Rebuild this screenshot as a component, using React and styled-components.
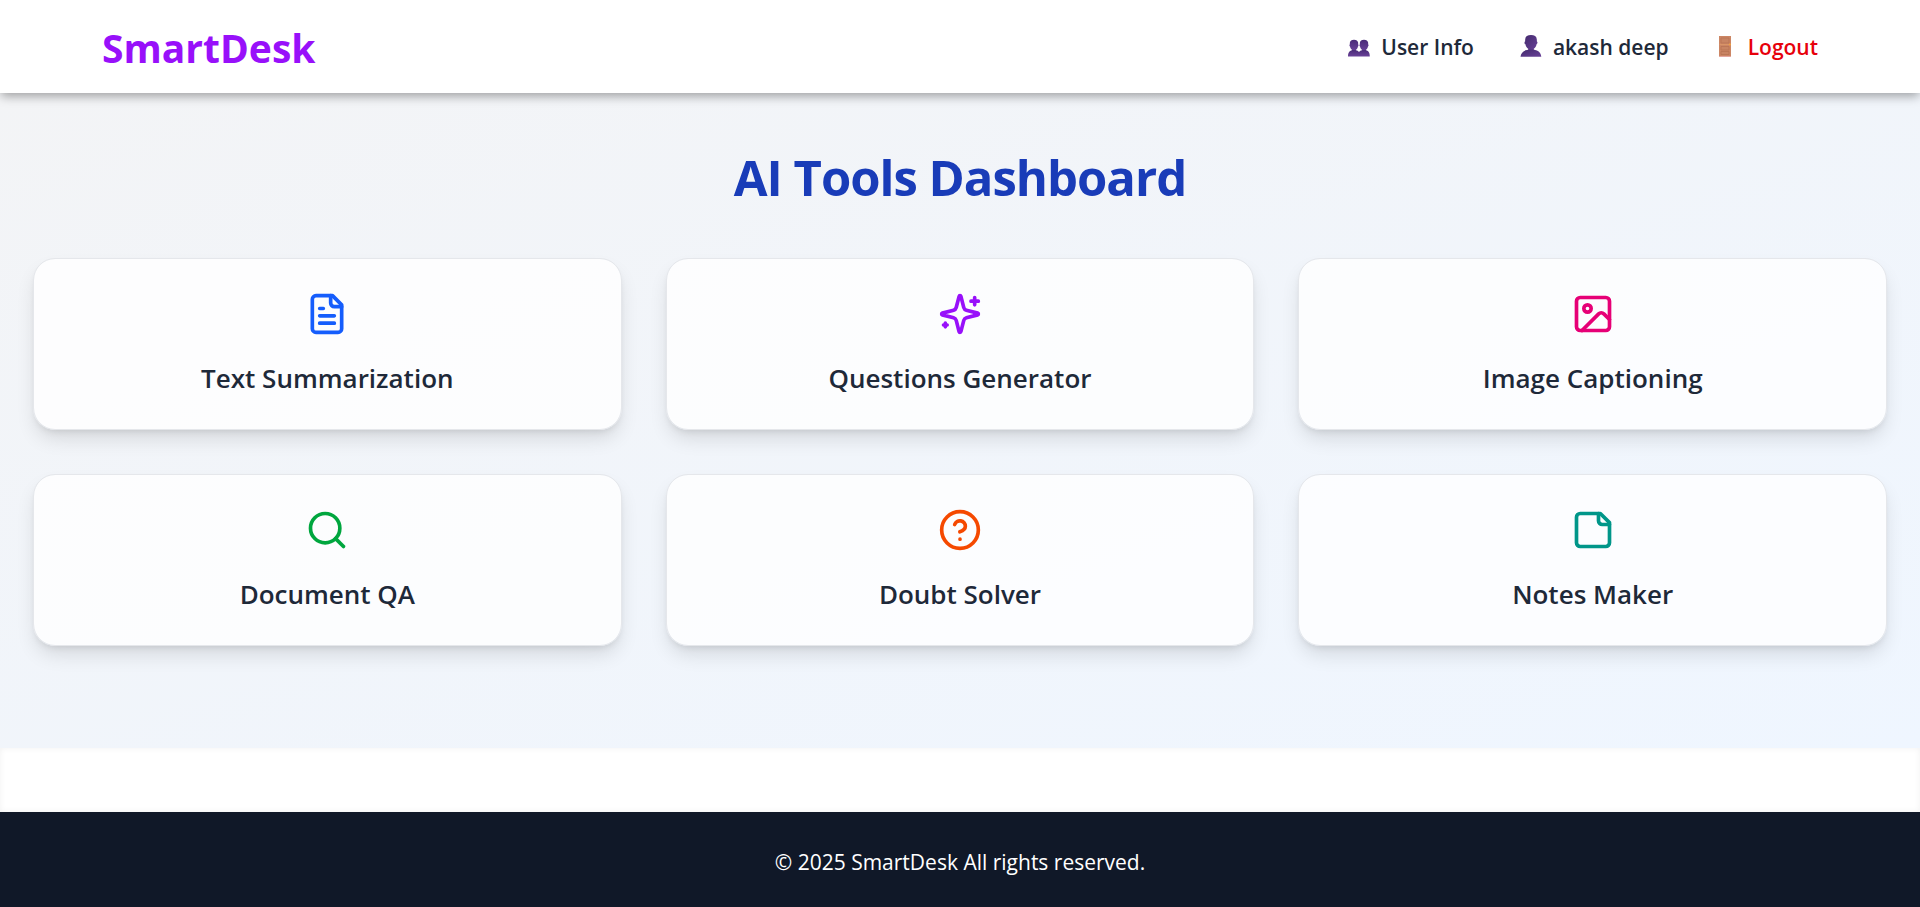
import React from "react";
import styled, { createGlobalStyle } from "styled-components";

const GlobalStyle = createGlobalStyle`
  *, *::before, *::after { box-sizing: border-box; }
  body {
    margin: 0;
    background: #ffffff;
    color: #1e2939;
    font-family: "Segoe UI", "Open Sans", "Noto Sans", sans-serif;
  }
`;

const Page = styled.div`
  min-height: 100vh;
  display: flex;
  flex-direction: column;
`;

const Header = styled.header`
  position: relative;
  z-index: 1;
  display: flex;
  align-items: center;
  justify-content: space-between;
  padding: 20px 102px 17px;
  background: #ffffff;
  box-shadow: 0 4px 10px -1px rgba(0, 0, 0, 0.36);
`;

const Brand = styled.a`
  color: #9810fa;
  font-size: 39px;
  line-height: 56px;
  font-weight: 700;
  text-decoration: none;
`;

const Nav = styled.nav`
  display: flex;
  align-items: center;
  gap: 45px;
  padding-bottom: 3px;
`;

const NavItem = styled.a`
  display: flex;
  align-items: center;
  gap: 10px;
  color: ${(p) => p.$color || "#1e2939"};
  font-size: 21px;
  line-height: 32px;
  font-weight: 600;
  text-decoration: none;
`;

const LogoutButton = styled(NavItem).attrs({ as: "button", type: "button" })`
  padding: 0;
  border: 0;
  background: none;
  font-family: inherit;
  cursor: pointer;
`;

const Main = styled.main`
  display: flex;
  flex-direction: column;
  gap: 47px;
  padding: 50px 33px 102px;
  background: linear-gradient(to bottom right, #f3f4f6, #eff6ff);
`;

const Title = styled.h1`
  margin: 0;
  color: #193cb8;
  font-size: 49px;
  line-height: 68px;
  font-weight: 700;
  letter-spacing: -1px;
  text-align: center;
`;

const Grid = styled.div`
  display: grid;
  grid-template-columns: repeat(3, minmax(0, 1fr));
  gap: 44px;
`;

const Card = styled.a`
  display: flex;
  flex-direction: column;
  align-items: center;
  gap: 25px;
  padding: 33px;
  border: 1px solid #e5e7eb;
  border-radius: 22px;
  background: rgba(255, 255, 255, 0.8);
  background-clip: padding-box;
  box-shadow: 0 11px 20px -3px rgba(0, 0, 0, 0.12), 0 4px 7px -3px rgba(0, 0, 0, 0.1);
  color: #1e2939;
  text-decoration: none;
`;

const CardIcon = styled.svg`
  width: 44px;
  height: 44px;
  fill: none;
  stroke: ${(p) => p.$color};
  stroke-width: 2;
  stroke-linecap: round;
  stroke-linejoin: round;
`;

const CardTitle = styled.h2`
  margin: 0;
  font-size: 26px;
  line-height: 35px;
  font-weight: 600;
  text-align: center;
`;

const Strip = styled.div`
  flex: 1;
  min-height: 64px;
  background: #ffffff;
  box-shadow: inset 0 0 6px rgba(0, 0, 0, 0.06);
`;

const Footer = styled.footer`
  padding: 36px 33px 30px;
  background: #101828;
  color: #ffffff;
  font-size: 21px;
  line-height: 29px;
  text-align: center;
`;

const FooterText = styled.p`
  margin: 0;
`;

const TwoUsersIcon = () => (
  <svg width="24" height="24" viewBox="0 -1 24 24" aria-hidden="true">
    <defs>
      <linearGradient id="users" x1="0" y1="0" x2="0" y2="1">
        <stop offset="0" stopColor="#4a2b78" />
        <stop offset="1" stopColor="#6a4299" />
      </linearGradient>
    </defs>
    <g fill="url(#users)">
      <path d="M2.9 6.6C3.1 4.7 4.6 3.7 7 3.7s3.9 1 4.1 2.9l.1 2c.5.1.5 1.6-.2 1.9-.3 1.5-1.1 2.6-2 3.2v1.2H5v-1.2c-.9-.6-1.7-1.700-2-3.200-.7-.3-.7-1.800-.2-1.900z" />
      <path d="M12.900 6.600c.2-1.900 1.700-2.900 4.100-2.900s3.900 1 4.100 2.900l.1 2c.5.1.5 1.600-.2 1.900-.3 1.500-1.100 2.600-2 3.200v1.200h-4v-1.200c-.9-.6-1.700-1.700-2-3.200-.7-.3-.7-1.800-.2-1.900z" />
      <path d="M1 20.500c0-4 1.500-6.500 6-6.500 2.600 0 4.200.7 5 2 .8-1.300 2.400-2 5-2 4.500 0 5.800 2.500 5.800 6.500z" />
    </g>
  </svg>
);

const UserIcon = () => (
  <svg width="24" height="24" viewBox="0 -1 24 24" aria-hidden="true">
    <defs>
      <linearGradient id="user" x1="0" y1="0" x2="1" y2="1">
        <stop offset="0" stopColor="#432a6d" />
        <stop offset="1" stopColor="#6a4299" />
      </linearGradient>
    </defs>
    <g fill="url(#user)">
      <path d="M6.2 3.2C6.4.4 8.6-1 12-1s5.6 1.4 5.8 4.2l.1 2.4c.9.1.8 2.3-.3 2.7-.4 2-1.5 3.5-2.8 4.5v2.2H9.2v-2.2c-1.3-1-2.4-2.500-2.800-4.500-1.100-.4-1.200-2.600-.3-2.700z" />
      <path d="M1.500 20.800c.6-5 4.200-7.300 10.500-7.300s9.700 2.300 10.300 7.300z" />
    </g>
  </svg>
);

const DoorIcon = () => (
  <svg width="24" height="24" viewBox="0 -1 24 24" aria-hidden="true">
    <rect x="5" y="0" width="12" height="21" fill="#cc8664" />
    <path d="M5 20.500h12" stroke="#e3a7a0" />
    <path d="M7 2h8v5H7zM7 10.500h8v3.500H7zM7 15.500h8v3H7z" fill="#c88463" stroke="#bb7656" />
    <path d="M5.500 8.500h11" stroke="#d99467" />
    <circle cx="16" cy="8.500" r="1" fill="#f2a33c" />
  </svg>
);

const tools = [
  {
    name: "Text Summarization",
    color: "#155dfc",
    art: (
      <>
        <path d="M15 2H6a2 2 0 0 0-2 2v16a2 2 0 0 0 2 2h12a2 2 0 0 0 2-2V7Z" />
        <path d="M14 2v4a2 2 0 0 0 2 2h4" />
        <path d="M10 9H8M16 13H8M16 17H8" />
      </>
    ),
  },
  {
    name: "Questions Generator",
    color: "#9810fa",
    art: (
      <>
        <path d="M9.937 15.5A2 2 0 0 0 8.5 14.063l-6.135-1.582a.5.5 0 0 1 0-.962L8.5 9.936A2 2 0 0 0 9.937 8.5l1.582-6.135a.5.5 0 0 1 .963 0L14.063 8.5A2 2 0 0 0 15.5 9.937l6.135 1.581a.5.5 0 0 1 0 .964L15.5 14.063a2 2 0 0 0-1.437 1.437l-1.582 6.135a.5.5 0 0 1-.963 0z" />
        <path d="M20 3v4M22 5h-4M4 17v2M5 18H3" />
      </>
    ),
  },
  {
    name: "Image Captioning",
    color: "#e60076",
    art: (
      <>
        <rect width="18" height="18" x="3" y="3" rx="2" ry="2" />
        <circle cx="9" cy="9" r="2" />
        <path d="m21 15-3.086-3.086a2 2 0 0 0-2.828 0L6 21" />
      </>
    ),
  },
  {
    name: "Document QA",
    color: "#00a63e",
    art: (
      <>
        <circle cx="11" cy="11" r="8" />
        <path d="m21 21-4.3-4.3" />
      </>
    ),
  },
  {
    name: "Doubt Solver",
    color: "#f54900",
    art: (
      <>
        <circle cx="12" cy="12" r="10" />
        <path d="M9.09 9a3 3 0 0 1 5.83 1c0 2-3 3-3 3M12 17h.01" />
      </>
    ),
  },
  {
    name: "Notes Maker",
    color: "#009689",
    art: (
      <>
        <path d="M16 3H5a2 2 0 0 0-2 2v14a2 2 0 0 0 2 2h14a2 2 0 0 0 2-2V8Z" />
        <path d="M15 3v4a2 2 0 0 0 2 2h4" />
      </>
    ),
  },
];

export default function App() {
  return (
    <Page>
      <GlobalStyle />
      <Header>
        <Brand href="#">SmartDesk</Brand>
        <Nav>
          <NavItem href="#users">
            <TwoUsersIcon />
            User Info
          </NavItem>
          <NavItem href="#profile">
            <UserIcon />
            akash deep
          </NavItem>
          <LogoutButton $color="#e7000b">
            <DoorIcon />
            Logout
          </LogoutButton>
        </Nav>
      </Header>
      <Main>
        <Title>AI Tools Dashboard</Title>
        <Grid>
          {tools.map((tool) => (
            <Card key={tool.name} href="#tool">
              <CardIcon viewBox="0 0 24 24" $color={tool.color} aria-hidden="true">
                {tool.art}
              </CardIcon>
              <CardTitle>{tool.name}</CardTitle>
            </Card>
          ))}
        </Grid>
      </Main>
      <Strip />
      <Footer>
        <FooterText>© 2025 SmartDesk All rights reserved.</FooterText>
      </Footer>
    </Page>
  );
}
